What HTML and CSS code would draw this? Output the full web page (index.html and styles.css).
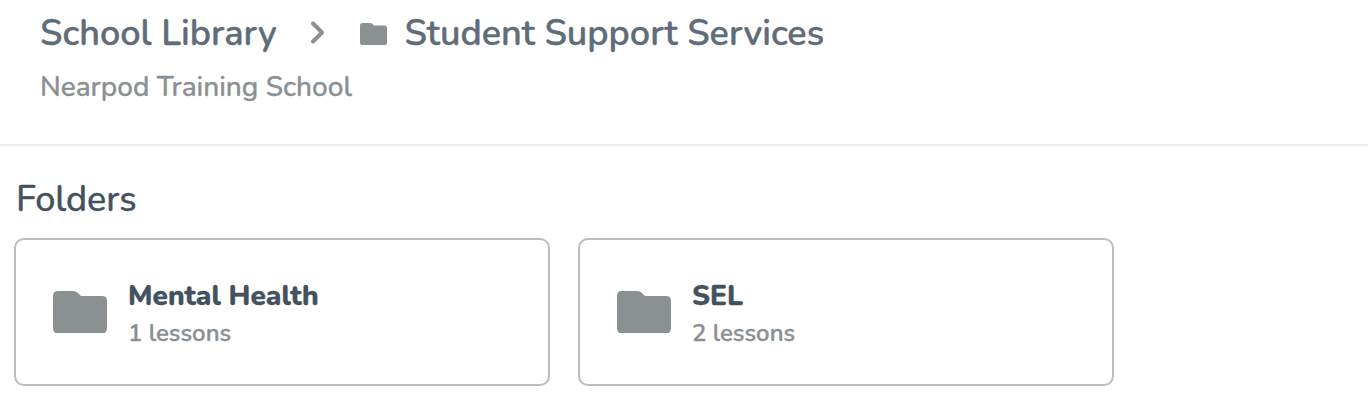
FILE: index.html
```html
<!DOCTYPE html>
<html lang="en">
<head>
<meta charset="utf-8">
<title>School Library</title>
<link rel="stylesheet" href="styles.css">
</head>
<body>
<header class="header">
  <nav class="breadcrumb">
    <span class="crumb crumb-root">School Library</span>
    <svg class="chevron" viewBox="0 0 16 26"><path d="M3 3.5L12 12.5L3 21.5"/></svg>
    <svg class="folder-small" viewBox="0 0 54 43" preserveAspectRatio="none"><path d="M5 0H20Q23 0 25 2L28 5H49Q54 5 54 10V38Q54 43 49 43H5Q0 43 0 38V5Q0 0 5 0Z"/></svg>
    <span class="crumb crumb-current">Student Support Services</span>
  </nav>
  <div><span class="school">Nearpod Training School</span></div>
</header>
<main class="content">
  <h2 class="section-title"><span>Folders</span></h2>
  <div class="cards">
    <article class="card">
      <svg class="folder" viewBox="0 0 54 43" preserveAspectRatio="none"><path d="M5 0H20Q23 0 25 2L28 5H49Q54 5 54 10V38Q54 43 49 43H5Q0 43 0 38V5Q0 0 5 0Z"/></svg>
      <div class="card-text">
        <h3 class="card-title">Mental Health</h3>
        <p class="card-count">1 lessons</p>
      </div>
    </article>
    <article class="card">
      <svg class="folder" viewBox="0 0 54 43" preserveAspectRatio="none"><path d="M5 0H20Q23 0 25 2L28 5H49Q54 5 54 10V38Q54 43 49 43H5Q0 43 0 38V5Q0 0 5 0Z"/></svg>
      <div class="card-text">
        <h3 class="card-title">SEL</h3>
        <p class="card-count">2 lessons</p>
      </div>
    </article>
  </div>
</main>
</body>
</html>
```

FILE: styles.css
```css
* { box-sizing: border-box; }
body {
  margin: 0;
  background: #fff;
  font-family: Nunito, Lato, "Open Sans", sans-serif;
  color: #43525e;
  -webkit-text-stroke: 0.35px;
}
.header {
  height: 146px;
  padding: 12px 0 0 40px;
  border-bottom: 2px solid #e9edf0;
}
.breadcrumb {
  display: flex;
  height: 44px;
  align-items: center;
  color: #5f6c79;
  font-size: 36px;
  font-weight: 600;
  line-height: 44px;
  white-space: nowrap;
}
.crumb-root { width: 236px; }
.crumb-current { margin-left: 18px; }
.chevron {
  width: 16px;
  height: 26px;
  margin-left: 34px;
  margin-top: -3px;
  fill: none;
  stroke: #8b9093;
  stroke-width: 4;
  stroke-linecap: round;
  stroke-linejoin: round;
}
.folder-small {
  width: 27px;
  height: 22px;
  margin: 0 0 0 33.5px;
  fill: #8b9093;
}
.school {
  display: block;
  margin-top: 13px;
  color: #8b9093;
  font-size: 28px;
  font-weight: 500;
  line-height: 36px;
}
.content { padding: 32px 14px 0; }
.section-title {
  margin: 0 0 16px 2px;
  font-size: 36px;
  font-weight: 500;
  line-height: 44px;
}
.cards { display: flex; gap: 28px; }
.card {
  display: flex;
  width: 536px;
  height: 148px;
  padding-left: 37px;
  border: 2px solid #b6bdc3;
  border-radius: 10px;
}
.folder {
  width: 54px;
  height: 42.5px;
  margin-top: 50.6px;
  fill: #8b9093;
}
.card-text { margin: 38px 0 0 21px; }
.card-title {
  margin: 0;
  font-size: 28px;
  font-weight: 800;
  line-height: 36px;
}
.card-count {
  margin: 3px 0 0;
  color: #8b9093;
  font-size: 24px;
  font-weight: 600;
  line-height: 32px;
}
```
